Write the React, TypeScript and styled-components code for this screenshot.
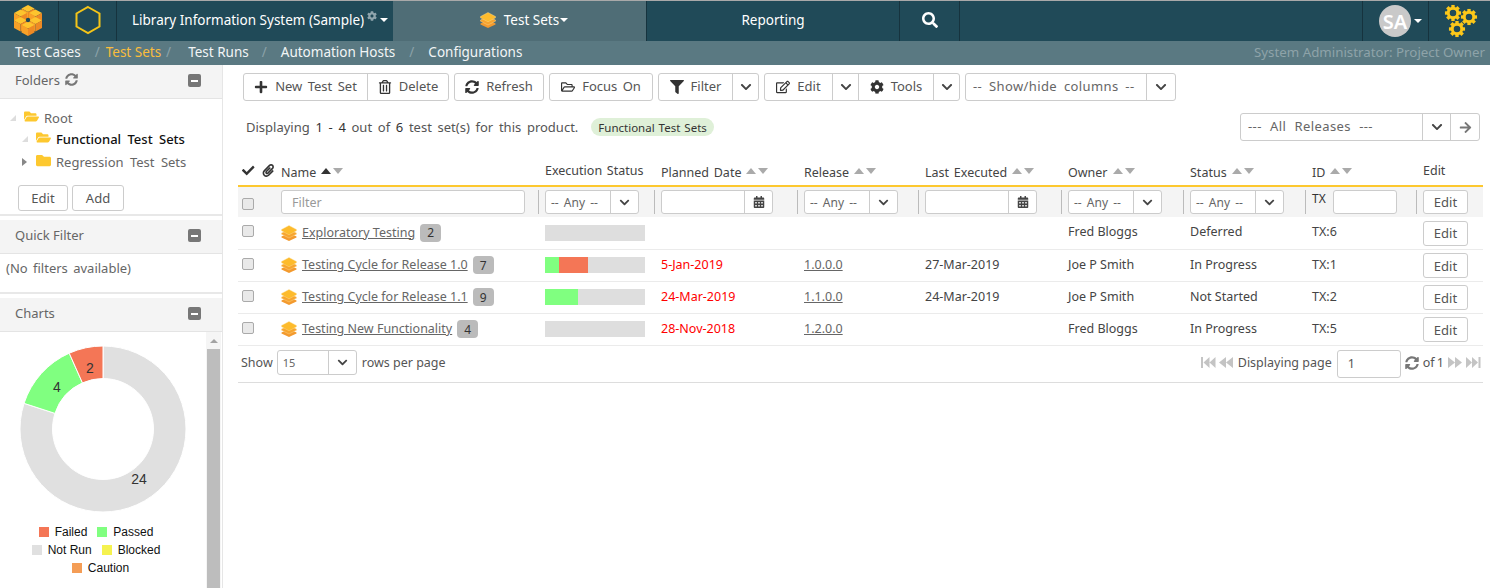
import styled, { createGlobalStyle } from "styled-components";
import {
  FaCalendarAlt,
  FaCheck,
  FaChevronDown,
  FaCog,
  FaFilter,
  FaPaperclip,
  FaPlus,
  FaRegEdit,
  FaRegFolderOpen,
  FaRegTrashAlt,
  FaSearch,
  FaSyncAlt,
  FaArrowRight,
  FaFolder,
  FaFolderOpen,
} from "react-icons/fa";

const Global = createGlobalStyle`
  html, body { margin: 0; padding: 0; background: #fff; }
  body {
    font-family: "Noto Sans", "Liberation Sans", sans-serif;
    font-size: 13px;
    color: #444;
    overflow: hidden;
    width: 1490px;
    height: 588px;
  }
  * { box-sizing: border-box; }
`;

const Page = styled.div`
  width: 1490px;
  height: 588px;
  display: flex;
  flex-direction: column;
  border-top: 1px solid #a9a9a9;
`;

const TopBar = styled.div`
  height: 40px;
  background: #204a58;
  display: flex;
  color: #fff;
`;

const TopCell = styled.div<{ $w: number; $active?: boolean }>`
  width: ${(p) => p.$w}px;
  display: flex;
  align-items: center;
  justify-content: center;
  gap: 5px;
  font-size: 13.5px;
  padding-bottom: 2px;
  border-right: 1px solid #16333e;
  background: ${(p) => (p.$active ? "#4f6d76" : "transparent")};
`;

const ProjectCell = styled(TopCell)`
  justify-content: flex-start;
  padding-left: 15px;
  gap: 3px;
  border-right: 0;
`;

const TabCell = styled(TopCell)`
  padding-left: 9px;
`;

const UserCell = styled(TopCell)`
  justify-content: flex-start;
  padding: 0 0 0 16px;
  gap: 3px;
  border-left: 1px solid #16333e;
`;

const GearCell = styled(TopCell)`
  padding: 0;
  border-right: 0;
`;

const Spacer = styled.div`
  flex: 1;
`;

const Caret = styled.span<{ $color?: string }>`
  display: inline-block;
  width: 0;
  height: 0;
  border-left: 4px solid transparent;
  border-right: 4px solid transparent;
  border-top: 4px solid ${(p) => p.$color || "#fff"};
`;

const Avatar = styled.div`
  width: 32px;
  height: 32px;
  border-radius: 50%;
  background: #c9c9c9;
  color: #fff;
  font-size: 20px;
  font-weight: 600;
  display: flex;
  align-items: center;
  justify-content: center;
`;

const SubBar = styled.div`
  height: 24px;
  background: #5a7982;
  display: flex;
  align-items: center;
  padding: 0 5px 2px 15px;
  color: #fff;
  font-size: 13.5px;
`;

const SubLink = styled.span<{ $on?: boolean; $ml: number }>`
  margin-left: ${(p) => p.$ml}px;
  color: ${(p) => (p.$on ? "#fbbd3c" : "#f2f5f6")};
  &:first-child { margin-left: 0; }
`;

const SubSep = styled.span<{ $ml: number }>`
  margin-left: ${(p) => p.$ml}px;
  color: #8ba2a9;
`;

const RoleText = styled.span`
  margin-left: auto;
  color: #8ea3a9;
  font-size: 13.3px;
`;

const Body = styled.div`
  flex: 1;
  display: flex;
  min-height: 0;
`;

const Sidebar = styled.div`
  width: 223px;
  border-right: 1px solid #e6e6e6;
  display: flex;
  flex-direction: column;
  overflow: hidden;
`;

const PanelHead = styled.div`
  height: 34px;
  flex: none;
  background: #f4f4f4;
  border-bottom: 1px solid #e4e4e4;
  display: flex;
  align-items: center;
  padding: 0 21px 4px 15px;
  color: #666;
  gap: 5px;
`;

const Collapse = styled.span`
  margin-left: auto;
  margin-top: 2px;
  width: 13px;
  height: 13px;
  border-radius: 2px;
  background: #777;
  display: flex;
  align-items: center;
  justify-content: center;
  &::after {
    content: "";
    width: 7px;
    height: 2px;
    background: #fff;
  }
`;

const PanelBody = styled.div<{ $h: number }>`
  height: ${(p) => p.$h}px;
  flex: none;
  border-bottom: 2px solid #e8e8e8;
  margin-bottom: 4px;
`;

const Tree = styled.div`
  padding-top: 8px;
  display: flex;
  flex-direction: column;
  word-spacing: 3px;
`;

const TreeRow = styled.div<{ $indent: number; $h: number; $strong?: boolean }>`
  height: ${(p) => p.$h}px;
  display: flex;
  align-items: center;
  padding-left: ${(p) => p.$indent}px;
  color: ${(p) => (p.$strong ? "#111" : "#666")};
  font-weight: ${(p) => (p.$strong ? 500 : 400)};
`;

const TreeArrow = styled.span<{ $open?: boolean }>`
  width: 12px;
  flex: none;
  margin-right: 2px;
  display: flex;
  &::before {
    content: "";
    width: 0;
    height: 0;
    ${(p) =>
      p.$open
        ? `border-bottom: 6px solid #ddd; border-left: 6px solid transparent;`
        : `border-left: 5px solid #888; border-top: 4px solid transparent; border-bottom: 4px solid transparent;`}
  }
`;

const FolderIcon = styled.span`
  display: flex;
  color: #fdc82f;
  font-size: 15px;
  margin-right: 5px;
  margin-top: -3px;
`;

const TreeActions = styled.div`
  display: flex;
  gap: 4px;
  padding: 11px 0 0 18px;
`;

const SmallBtn = styled.span<{ $w: number }>`
  width: ${(p) => p.$w}px;
  height: 26px;
  border: 1px solid #ccc;
  border-radius: 3px;
  background: #fff;
  display: flex;
  align-items: center;
  justify-content: center;
  color: #555;
`;

const NoFilters = styled.div`
  padding: 5px 0 0 6px;
  color: #666;
  word-spacing: 2px;
`;

const ChartPane = styled.div`
  position: relative;
  flex: 1;
`;

const ChartSvg = styled.svg`
  display: block;
  margin: 13px 0 0 0;
`;

const ScrollTrack = styled.div`
  position: absolute;
  right: 1px;
  top: 0;
  bottom: 0;
  width: 15px;
  background: #f5f5f5;
  display: flex;
  flex-direction: column;
  align-items: center;
  padding-top: 7px;
  &::before {
    content: "";
    border-left: 4px solid transparent;
    border-right: 4px solid transparent;
    border-bottom: 4px solid #a3a3a3;
  }
  &::after {
    content: "";
    margin-top: 6px;
    width: 13px;
    flex: 1;
    background: #bdbdbd;
  }
`;

const Legend = styled.div`
  width: 206px;
  margin-top: 9px;
  display: flex;
  flex-direction: column;
  align-items: center;
  gap: 3px;
  font-family: "Liberation Sans", Arial, sans-serif;
  font-size: 12px;
  color: #111;
`;

const LegendRow = styled.div<{ $shift: number }>`
  height: 15px;
  display: flex;
  align-items: center;
  gap: 10px;
  padding-right: ${(p) => p.$shift}px;
`;

const LegendItem = styled.span`
  display: flex;
  align-items: center;
  gap: 6px;
`;

const Swatch = styled.i<{ $c: string }>`
  width: 10px;
  height: 10px;
  background: ${(p) => p.$c};
`;

const Main = styled.div`
  flex: 1;
  padding: 8px 7px 0 15px;
  min-width: 0;
`;

const Toolbar = styled.div`
  display: flex;
  gap: 5px;
  padding-left: 5px;
  height: 28px;
  word-spacing: 2px;
`;

const BtnGroup = styled.div`
  display: flex;
  border: 1px solid #ccc;
  border-radius: 3px;
  background: #fff;
  height: 28px;
`;

const Btn = styled.span<{ $w: number; $last?: boolean }>`
  width: ${(p) => p.$w}px;
  display: flex;
  align-items: center;
  justify-content: center;
  gap: 7px;
  padding-bottom: 2px;
  color: #555;
  border-right: ${(p) => (p.$last ? "0" : "1px solid #ccc")};
  svg { color: #333; font-size: 14px; flex: none; margin-top: 1px; }
`;

const Chevron = styled(Btn)`
  padding-bottom: 0;
  svg { font-size: 12px; color: #444; margin-top: 0; }
`;

const GoArrow = styled(Chevron)`
  svg { font-size: 13px; color: #777; }
`;

const SelectText = styled.span<{ $w: number }>`
  width: ${(p) => p.$w}px;
  display: flex;
  align-items: center;
  padding: 0 0 2px 7px;
  color: #666;
  border-right: 1px solid #ccc;
  white-space: pre;
  letter-spacing: 0.4px;
  word-spacing: 3px;
`;

const ReleaseText = styled(SelectText)`
  word-spacing: 4.5px;
`;

const InfoRow = styled.div`
  height: 28px;
  margin-top: 12px;
  display: flex;
  align-items: center;
  padding-left: 8px;
  color: #555;
  word-spacing: 2.3px;
  b { font-weight: 400; color: #333; }
`;

const Pill = styled.span`
  margin-left: 13px;
  height: 18px;
  padding: 0 7px;
  border-radius: 9px;
  background: #dff0d8;
  color: #333;
  font-size: 11.5px;
  word-spacing: 1px;
  display: flex;
  align-items: center;
`;

const ReleaseBox = styled(BtnGroup)`
  margin-left: auto;
  margin-right: 3px;
  word-spacing: 0;
`;

const Grid = styled.table`
  margin-top: 8px;
  width: 1245px;
  table-layout: fixed;
  border-collapse: collapse;
  font-size: 12.5px;
  td, th { padding: 0; }
`;

const HeadRow = styled.tr`
  height: 37px;
  border-bottom: 2px solid #fdc82f;
`;

const Th = styled.th`
  padding-left: 7px !important;
  text-align: left;
  font-weight: 400;
  color: #444;
  white-space: nowrap;
  vertical-align: middle;
  word-spacing: 1.5px;
`;

const ThInner = styled.div<{ $up?: boolean }>`
  display: flex;
  align-items: center;
  gap: 5px;
  position: relative;
  top: ${(p) => (p.$up ? "3px" : "5px")};
`;

const Sort = styled.span`
  display: flex;
  gap: 2px;
  margin-top: -3px;
`;

const SortTri = styled.i<{ $down?: boolean; $dark?: boolean }>`
  width: 0;
  height: 0;
  border-left: 5.5px solid transparent;
  border-right: 5.5px solid transparent;
  ${(p) =>
    p.$down
      ? `border-top: 6px solid ${p.$dark ? "#333" : "#aaa"};`
      : `border-bottom: 6px solid ${p.$dark ? "#333" : "#aaa"};`}
`;

const CheckHead = styled.div`
  display: flex;
  gap: 7px;
  padding-left: 4px;
  color: #333;
  font-size: 13px;
  position: relative;
  top: 3px;
`;

const FilterRow = styled.tr`
  height: 31px;
  background: #f4f4f4;
`;

const FilterCell = styled.td<{ $sep?: boolean }>`
  padding: 0 0 0 7px !important;
  position: relative;
  &::before {
    content: "";
    display: ${(p) => (p.$sep ? "block" : "none")};
    position: absolute;
    left: 0;
    top: 3px;
    bottom: 3px;
    width: 1px;
    background: #bbb;
  }
`;

const Input = styled.div<{ $w: number }>`
  width: ${(p) => p.$w}px;
  height: 24px;
  border: 1px solid #ccc;
  border-radius: 3px;
  background: #fff;
  display: flex;
  align-items: center;
  padding-left: 10px;
  color: #999;
`;

const SmallSelect = styled.div<{ $w: number }>`
  width: ${(p) => p.$w}px;
  height: 24px;
  border: 1px solid #ccc;
  border-radius: 3px;
  background: #fff;
  display: flex;
  color: #666;
  font-size: 12px;
`;

const SelectLabel = styled.span`
  flex: 1;
  display: flex;
  align-items: center;
  padding-left: 5px;
  white-space: pre;
  word-spacing: 2px;
`;

const SelectBtn = styled.span<{ $w: number }>`
  width: ${(p) => p.$w}px;
  border-left: 1px solid #ccc;
  display: flex;
  align-items: center;
  justify-content: center;
  color: #444;
  svg { font-size: 11px; }
`;

const TxRow = styled.div`
  display: flex;
  gap: 7px;
  color: #333;
  font-size: 12px;
  line-height: 18px;
`;

const Check = styled.span<{ $top: number }>`
  display: block;
  width: 12px;
  height: 12px;
  margin: ${(p) => p.$top}px 0 0 4px;
  border: 1px solid #aaa;
  border-radius: 2px;
  background: #e9e9e9;
`;

const DataRow = styled.tr`
  height: 32px;
  border-bottom: 1px solid #ebebeb;
`;

const Td = styled.td<{ $red?: boolean }>`
  padding: 0 0 2px 7px !important;
  color: ${(p) => (p.$red ? "#f00" : "#444")};
  white-space: nowrap;
`;

const FlushTd = styled.td`
  padding: 0 0 0 7px !important;
  white-space: nowrap;
`;

const NameCell = styled.div`
  display: flex;
  align-items: center;
`;

const RowLink = styled.a<{ $ml?: number }>`
  color: #666;
  text-decoration: underline;
  margin-left: ${(p) => p.$ml ?? 5}px;
`;

const NameLink = styled(RowLink)`
  margin-top: -1px;
`;

const Count = styled.span`
  margin-left: 5px;
  min-width: 21px;
  height: 18px;
  padding: 0 6px;
  border-radius: 4px;
  background: #bbb;
  color: #333;
  font-size: 12px;
  display: flex;
  align-items: center;
  justify-content: center;
`;

const Bar = styled.div`
  width: 100px;
  height: 16px;
  background: #dedede;
  display: flex;
`;

const BarPart = styled.i<{ $c: string }>`
  height: 100%;
  background: ${(p) => p.$c};
`;

const EditBtn = styled.span<{ $top?: number }>`
  width: 45px;
  height: ${(p) => (p.$top === 0 ? 24 : 25)}px;
  border: 1px solid #ccc;
  border-radius: 3px;
  background: #fff;
  color: #555;
  display: flex;
  align-items: center;
  justify-content: center;
  margin-top: ${(p) => p.$top ?? 1}px;
  font-size: 13px;
`;

const Footer = styled.div`
  height: 37px;
  width: 1245px;
  border-bottom: 1px solid #ddd;
  display: flex;
  align-items: center;
  padding: 0 2px 2px 3px;
  color: #555;
  font-size: 12.5px;
`;

const RowsSelect = styled(SmallSelect)`
  margin: 0 5px 0 4px;
  height: 25px;
  width: 80px;
  font-size: 11px;
`;

const Pager = styled.div`
  margin-left: auto;
  display: flex;
  align-items: center;
  gap: 4px;
`;

const PagerInput = styled.div`
  width: 64px;
  height: 28px;
  margin: 2px 0 0 1px;
  border: 1px solid #ccc;
  border-radius: 3px;
  display: flex;
  align-items: center;
  padding-left: 10px;
`;

const PagerIcon = styled.svg`
  display: block;
  fill: #c4c4c4;
`;

const PageCount = styled.span`
  word-spacing: -1px;
`;

function Stack({ size = 16 }: { size?: number }) {
  return (
    <svg width={size} height={size} viewBox="0 0 16 16">
      <path d="M8 8 L15.5 11.5 V12.5 L8 16 L.5 12.5 V11.5Z" fill="#f39a2e" />
      <path d="M8 4.5 L15.5 8 V9.2 L8 13 L.5 9.2 V8Z" fill="#f7a52f" stroke="#fde0a0" strokeWidth=".4" />
      <path d="M8 .5 L15.5 4.5 V5.8 L8 9.8 L.5 5.8 V4.5Z" fill="#fdbb2c" stroke="#fde0a0" strokeWidth=".4" />
    </svg>
  );
}

function Logo() {
  const cube = (x: number, y: number, key: number) => (
    <g key={key} transform={`translate(${x} ${y})`}>
      <path d="M0 -7 L6.5 -3.5 L0 0 L-6.5 -3.5Z" fill="#fdc42e" />
      <path d="M-6.5 -3.5 L0 0 L0 7.5 L-6.5 4Z" fill="#f7a128" />
      <path d="M6.5 -3.5 L0 0 L0 7.5 L6.5 4Z" fill="#ee8a24" />
    </g>
  );
  return (
    <svg width="28" height="32" viewBox="0 0 28 32" style={{ marginRight: 2 }}>
      {[
        [14, 8],
        [6.5, 12.5],
        [21.5, 12.5],
        [6.5, 20],
        [21.5, 20],
        [14, 24.5],
      ].map(([x, y], i) => cube(x, y, i))}
      <circle cx="14" cy="16" r="2.2" fill="#204a58" />
    </svg>
  );
}

function Gear({ x, y, r }: { x: number; y: number; r: number }) {
  const teeth = Array.from({ length: 8 }, (_, i) => i * 45);
  return (
    <g transform={`translate(${x} ${y})`}>
      {teeth.map((a) => (
        <rect key={a} x={-r * 0.24} y={-r * 1.15} width={r * 0.48} height={r * 0.6} transform={`rotate(${a})`} fill="#fcc719" />
      ))}
      <circle r={r * 0.68} fill="none" stroke="#fcc719" strokeWidth={r * 0.42} />
    </g>
  );
}

function Gears() {
  return (
    <svg width="36" height="34" viewBox="0 0 36 34">
      <Gear x={11} y={9} r={7} />
      <Gear x={27} y={13} r={7} />
      <Gear x={15} y={25} r={7} />
    </svg>
  );
}

function Donut() {
  const cx = 103;
  const cy = 84;
  const R = 83;
  const r = 50.5;
  const pt = (rad: number, deg: number) => {
    const a = ((deg - 90) * Math.PI) / 180;
    return `${(cx + rad * Math.cos(a)).toFixed(2)} ${(cy + rad * Math.sin(a)).toFixed(2)}`;
  };
  const seg = (from: number, to: number) => {
    const large = to - from > 180 ? 1 : 0;
    return `M${pt(R, from)} A${R} ${R} 0 ${large} 1 ${pt(R, to)} L${pt(r, to)} A${r} ${r} 0 ${large} 0 ${pt(r, from)}Z`;
  };
  return (
    <ChartSvg width="206" height="170" viewBox="0 0 206 170">
      <path d={seg(0, 288)} fill="#e0e0e0" stroke="#fff" />
      <path d={seg(288, 336)} fill="#80ff80" stroke="#fff" />
      <path d={seg(336, 360)} fill="#f47656" stroke="#fff" />
      <g fontFamily="Liberation Sans, Arial, sans-serif" fontSize="14" fill="#333" textAnchor="middle">
        <text x="90" y="28">2</text>
        <text x="57" y="47">4</text>
        <text x="139" y="139">24</text>
      </g>
    </ChartSvg>
  );
}

const Hexagon = () => (
  <svg width="26" height="30" viewBox="0 0 26 30">
    <path d="M13 2 L24.5 8.5 V21.5 L13 28 L1.5 21.5 V8.5Z" fill="none" stroke="#f5c518" strokeWidth="2" />
  </svg>
);

const rows = [
  { name: "Exploratory Testing", count: 2, bar: [] as [string, number][], planned: "", release: "", last: "", owner: "Fred Bloggs", status: "Deferred", id: "TX:6" },
  { name: "Testing Cycle for Release 1.0", count: 7, bar: [["#80ff80", 14], ["#f47656", 29]] as [string, number][], planned: "5-Jan-2019", release: "1.0.0.0", last: "27-Mar-2019", owner: "Joe P Smith", status: "In Progress", id: "TX:1" },
  { name: "Testing Cycle for Release 1.1", count: 9, bar: [["#80ff80", 33]] as [string, number][], planned: "24-Mar-2019", release: "1.1.0.0", last: "24-Mar-2019", owner: "Joe P Smith", status: "Not Started", id: "TX:2" },
  { name: "Testing New Functionality", count: 4, bar: [] as [string, number][], planned: "28-Nov-2018", release: "1.2.0.0", last: "", owner: "Fred Bloggs", status: "In Progress", id: "TX:5" },
];

const SortPair = ({ dark }: { dark?: boolean }) => (
  <Sort>
    <SortTri $dark={dark} />
    <SortTri $down />
  </Sort>
);

const AnySelect = () => (
  <SmallSelect $w={94}>
    <SelectLabel>-- Any --</SelectLabel>
    <SelectBtn $w={28}><FaChevronDown /></SelectBtn>
  </SmallSelect>
);

const DateInput = () => (
  <SmallSelect $w={112}>
    <SelectLabel />
    <SelectBtn $w={28}><FaCalendarAlt style={{ fontSize: 12 }} /></SelectBtn>
  </SmallSelect>
);

export default function App() {
  return (
    <>
      <Global />
      <Page>
        <TopBar>
          <TopCell $w={59}><Logo /></TopCell>
          <TopCell $w={58}><Hexagon /></TopCell>
          <ProjectCell $w={276}>
            Library Information System (Sample)
            <FaCog style={{ fontSize: 10, color: "#8fa5ad", marginTop: -8 }} />
            <Caret />
          </ProjectCell>
          <TabCell $w={254} $active>
            <Stack size={16} />
            <span style={{ marginLeft: 3 }}>Test Sets</span>
            <Caret style={{ marginLeft: -4 }} />
          </TabCell>
          <TopCell $w={253}>Reporting</TopCell>
          <TopCell $w={60}><FaSearch style={{ fontSize: 16 }} /></TopCell>
          <Spacer />
          <UserCell $w={67}><Avatar>SA</Avatar><Caret /></UserCell>
          <GearCell $w={61}><Gears /></GearCell>
        </TopBar>
        <SubBar>
          <SubLink $ml={0}>Test Cases</SubLink>
          <SubSep $ml={14}>/</SubSep>
          <SubLink $ml={6} $on>Test Sets</SubLink>
          <SubSep $ml={5}>/</SubSep>
          <SubLink $ml={17}>Test Runs</SubLink>
          <SubSep $ml={13}>/</SubSep>
          <SubLink $ml={14}>Automation Hosts</SubLink>
          <SubSep $ml={14}>/</SubSep>
          <SubLink $ml={14}>Configurations</SubLink>
          <RoleText>System Administrator: Project Owner</RoleText>
        </SubBar>
        <Body>
          <Sidebar>
            <PanelHead>Folders <FaSyncAlt style={{ fontSize: 13, color: "#777" }} /><Collapse /></PanelHead>
            <PanelBody $h={117}>
              <Tree>
                <TreeRow $indent={10} $h={21}><TreeArrow $open /><FolderIcon><FaFolderOpen /></FolderIcon>Root</TreeRow>
                <TreeRow $indent={22} $h={22} $strong><TreeArrow $open /><FolderIcon><FaFolderOpen /></FolderIcon>Functional Test Sets</TreeRow>
                <TreeRow $indent={22} $h={24}><TreeArrow /><FolderIcon><FaFolder /></FolderIcon>Regression Test Sets</TreeRow>
              </Tree>
              <TreeActions>
                <SmallBtn $w={50}>Edit</SmallBtn>
                <SmallBtn $w={52}>Add</SmallBtn>
              </TreeActions>
            </PanelBody>
            <PanelHead>Quick Filter<Collapse /></PanelHead>
            <PanelBody $h={40}><NoFilters>(No filters available)</NoFilters></PanelBody>
            <PanelHead>Charts<Collapse /></PanelHead>
            <ChartPane>
              <ScrollTrack />
              <Donut />
              <Legend>
                <LegendRow $shift={14}>
                  <LegendItem><Swatch $c="#f47656" />Failed</LegendItem>
                  <LegendItem><Swatch $c="#80ff80" />Passed</LegendItem>
                </LegendRow>
                <LegendRow $shift={14}>
                  <LegendItem><Swatch $c="#e0e0e0" />Not Run</LegendItem>
                  <LegendItem><Swatch $c="#f5f24f" />Blocked</LegendItem>
                </LegendRow>
                <LegendRow $shift={5}>
                  <LegendItem><Swatch $c="#f49d56" />Caution</LegendItem>
                </LegendRow>
              </Legend>
            </ChartPane>
          </Sidebar>
          <Main>
            <Toolbar>
              <BtnGroup>
                <Btn $w={124}><FaPlus />New Test Set</Btn>
                <Btn $w={80} $last><FaRegTrashAlt />Delete</Btn>
              </BtnGroup>
              <BtnGroup><Btn $w={88} $last><FaSyncAlt />Refresh</Btn></BtnGroup>
              <BtnGroup><Btn $w={102} $last><FaRegFolderOpen />Focus On</Btn></BtnGroup>
              <BtnGroup>
                <Btn $w={74}><FaFilter />Filter</Btn>
                <Chevron $w={25} $last><FaChevronDown /></Chevron>
              </BtnGroup>
              <BtnGroup>
                <Btn $w={68}><FaRegEdit />Edit</Btn>
                <Chevron $w={26}><FaChevronDown /></Chevron>
                <Btn $w={75}><FaCog />Tools</Btn>
                <Chevron $w={25} $last><FaChevronDown /></Chevron>
              </BtnGroup>
              <BtnGroup>
                <SelectText $w={181}>-- Show/hide columns --</SelectText>
                <Chevron $w={28} $last><FaChevronDown /></Chevron>
              </BtnGroup>
            </Toolbar>
            <InfoRow>
              Displaying&nbsp;<b>1 - 4</b>&nbsp;out of&nbsp;<b>6</b>&nbsp;test set(s) for this product.
              <Pill>Functional Test Sets</Pill>
              <ReleaseBox>
                <ReleaseText $w={182}>--- All Releases ---</ReleaseText>
                <Chevron $w={28}><FaChevronDown /></Chevron>
                <GoArrow $w={28} $last><FaArrowRight /></GoArrow>
              </ReleaseBox>
            </InfoRow>
            <Grid>
              <colgroup>
                {[36, 264, 116, 143, 121, 143, 122, 122, 111, 67].map((w, i) => (
                  <col key={i} style={{ width: w }} />
                ))}
              </colgroup>
              <thead>
                <HeadRow>
                  <th><CheckHead><FaCheck /><FaPaperclip /></CheckHead></th>
                  <Th><ThInner>Name<SortPair dark /></ThInner></Th>
                  <Th><ThInner $up>Execution Status</ThInner></Th>
                  <Th><ThInner>Planned Date<SortPair /></ThInner></Th>
                  <Th><ThInner>Release<SortPair /></ThInner></Th>
                  <Th><ThInner>Last Executed<SortPair /></ThInner></Th>
                  <Th><ThInner>Owner<SortPair /></ThInner></Th>
                  <Th><ThInner>Status<SortPair /></ThInner></Th>
                  <Th><ThInner>ID<SortPair /></ThInner></Th>
                  <Th><ThInner $up>Edit</ThInner></Th>
                </HeadRow>
                <FilterRow>
                  <td><Check $top={3} /></td>
                  <FilterCell><Input $w={244}>Filter</Input></FilterCell>
                  <FilterCell $sep><AnySelect /></FilterCell>
                  <FilterCell $sep><DateInput /></FilterCell>
                  <FilterCell $sep><AnySelect /></FilterCell>
                  <FilterCell $sep><DateInput /></FilterCell>
                  <FilterCell $sep><AnySelect /></FilterCell>
                  <FilterCell $sep><AnySelect /></FilterCell>
                  <FilterCell $sep><TxRow>TX<Input $w={64} /></TxRow></FilterCell>
                  <FilterCell $sep><EditBtn $top={0}>Edit</EditBtn></FilterCell>
                </FilterRow>
              </thead>
              <tbody>
                {rows.map((r) => (
                  <DataRow key={r.id}>
                    <td><Check $top={-3} /></td>
                    <FlushTd>
                      <NameCell>
                        <Stack size={16} />
                        <NameLink>{r.name}</NameLink>
                        <Count>{r.count}</Count>
                      </NameCell>
                    </FlushTd>
                    <FlushTd>
                      <Bar>
                        {r.bar.map(([c, w]) => (
                          <BarPart key={c} $c={c} style={{ width: w }} />
                        ))}
                      </Bar>
                    </FlushTd>
                    <Td $red>{r.planned}</Td>
                    <Td><RowLink $ml={0}>{r.release}</RowLink></Td>
                    <Td>{r.last}</Td>
                    <Td>{r.owner}</Td>
                    <Td>{r.status}</Td>
                    <Td>{r.id}</Td>
                    <FlushTd><EditBtn>Edit</EditBtn></FlushTd>
                  </DataRow>
                ))}
              </tbody>
            </Grid>
            <Footer>
              Show
              <RowsSelect $w={80}>
                <SelectLabel>15</SelectLabel>
                <SelectBtn $w={28}><FaChevronDown /></SelectBtn>
              </RowsSelect>
              rows per page
              <Pager>
                <PagerIcon width="33" height="11" viewBox="0 0 33 11"><path d="M0 0h2v11H0zM2.5 5.5L8.5 0v11zM8.5 5.5L14.5 0v11zM18 5.5L25 0v11zM25 5.5L32 0v11z" /></PagerIcon>
                Displaying page
                <PagerInput>1</PagerInput>
                <FaSyncAlt style={{ color: "#777", fontSize: 14 }} />
                <PageCount>of 1</PageCount>
                <PagerIcon width="33" height="11" viewBox="0 0 33 11"><path d="M0 0l7 5.5L0 11zM7 0l7 5.5L7 11zM18 0l6 5.5-6 5.5zM24 0l6 5.5-6 5.5zM30.5 0h2v11h-2z" /></PagerIcon>
              </Pager>
            </Footer>
          </Main>
        </Body>
      </Page>
    </>
  );
}
